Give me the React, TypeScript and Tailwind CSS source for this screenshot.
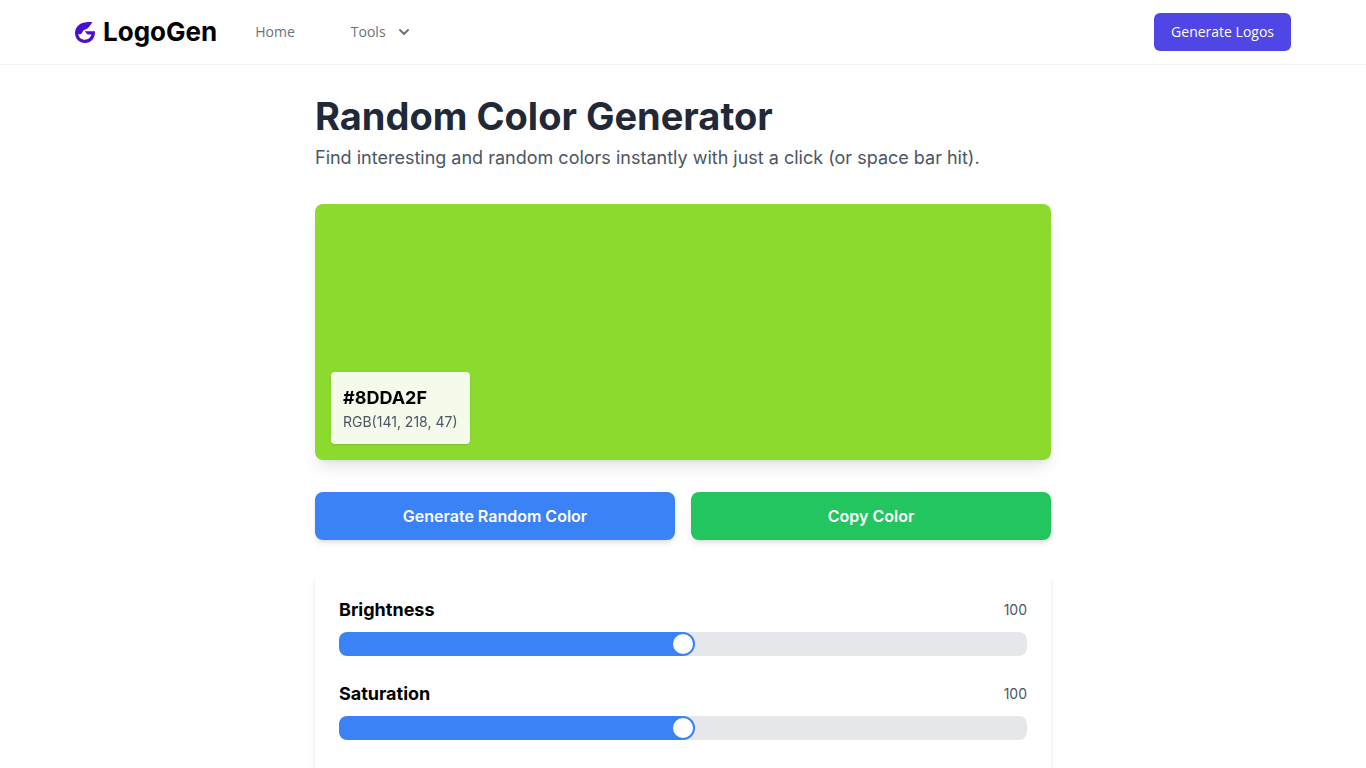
import { useEffect, useState } from "react"

function Logo() {
  return (
    <a href="#" className="flex items-center gap-2">
      <svg className="h-[22px] w-5" viewBox="0 0 20 22" aria-hidden="true">
        <path
          fill="#4a0fd0"
          d="M17.500 1C11 1 7.500 1.300 4.500 3.400C1.500 5.500 0 8.500 0 12C0 17.700 4.400 22 10 22C15.800 22 20 17.700 20 11V10.200H9.600L12.600 13.600H16.400C15.700 16.600 13.200 18.700 10 18.700C6.400 18.700 3.600 16.200 3.200 12.900C4.400 13.700 6.200 13.300 7 12C7.800 10.200 8.300 9.200 10.400 8.600C13.600 7.600 15 4.300 17.500 1Z"
        />
      </svg>
      <span className="font-['Inter',sans-serif] text-[26px] leading-8 font-bold text-black">LogoGen</span>
    </a>
  )
}

function Navbar() {
  return (
    <nav className="bg-white font-['Open_Sans',sans-serif] text-sm shadow-[0_1px_0_#f3f4f6]">
      <div className="mx-auto flex h-16 max-w-7xl items-center justify-between px-4 sm:px-8">
        <div className="flex items-center gap-[38px]">
          <Logo />
          <div className="hidden items-center gap-14 text-[#6b7280] sm:flex">
            <a href="#" className="hover:text-gray-900">Home</a>
            <button type="button" className="flex items-center gap-2 hover:text-gray-900">
              Tools
              <svg className="h-5 w-5" viewBox="0 0 20 20" fill="currentColor" aria-hidden="true">
                <path
                  fillRule="evenodd"
                  clipRule="evenodd"
                  d="M5.293 7.293a1 1 0 011.414 0L10 10.586l3.293-3.293a1 1 0 111.414 1.414l-4 4a1 1 0 01-1.414 0l-4-4a1 1 0 010-1.414z"
                />
              </svg>
            </button>
          </div>
        </div>
        <a
          href="#"
          className="rounded-md border border-transparent bg-[#4f46e5] px-4 py-2 text-white hover:bg-indigo-700"
        >
          Generate Logos
        </a>
      </div>
    </nav>
  )
}

type SliderProps = {
  id: string
  label: string
  value: number
  onChange: (value: number) => void
}

function Slider({ id, label, value, onChange }: SliderProps) {
  const percent = value / 2

  return (
    <div>
      <div className="mb-2 flex items-center justify-between">
        <label htmlFor={id} className="text-lg leading-7 font-bold text-black">{label}</label>
        <span className="text-sm text-[#4b5563]">{value}</span>
      </div>
      <input
        id={id}
        type="range"
        min={0}
        max={200}
        value={value}
        onChange={(e) => onChange(Number(e.target.value))}
        style={{ backgroundImage: `linear-gradient(to right, #3b82f6 ${percent}%, #e5e7eb ${percent}%)` }}
        className="block h-6 w-full cursor-pointer appearance-none rounded-lg [&::-webkit-slider-thumb]:h-6 [&::-webkit-slider-thumb]:w-6 [&::-webkit-slider-thumb]:appearance-none [&::-webkit-slider-thumb]:rounded-full [&::-webkit-slider-thumb]:border-2 [&::-webkit-slider-thumb]:border-[#3b82f6] [&::-webkit-slider-thumb]:bg-white"
      />
    </div>
  )
}

export default function App() {
  const [color, setColor] = useState([141, 218, 47])
  const [brightness, setBrightness] = useState(100)
  const [saturation, setSaturation] = useState(100)

  const hex = "#" + color.map((c) => c.toString(16).padStart(2, "0")).join("").toUpperCase()

  function handleGenerate() {
    setColor([0, 0, 0].map(() => Math.floor(Math.random() * 256)))
  }

  function handleCopy() {
    navigator.clipboard.writeText(hex)
  }

  useEffect(() => {
    function handleKey(e: KeyboardEvent) {
      if (e.code === "Space" && e.target === document.body) {
        e.preventDefault()
        handleGenerate()
      }
    }
    window.addEventListener("keydown", handleKey)
    return () => window.removeEventListener("keydown", handleKey)
  }, [])

  return (
    <div className="min-h-screen bg-white font-['Inter',sans-serif]">
      <Navbar />

      <main className="mx-auto max-w-3xl px-4 py-8">
        <h1 className="mb-2 text-[38px] leading-10 font-bold text-[#1f2937]">
          Random Color Generator
        </h1>
        <p className="mb-8 text-lg leading-7 text-[#4b5563]">
          Find interesting and random colors instantly with just a click (or space bar hit).
        </p>

        <div
          className="mb-8 flex h-64 items-end rounded-lg p-4 shadow-lg"
          style={{ backgroundColor: hex, filter: `brightness(${brightness}%) saturate(${saturation}%)` }}
        >
          <div className="rounded bg-white/90 p-3 shadow">
            <p className="text-lg leading-7 font-bold text-black">{hex}</p>
            <p className="text-sm text-[#4b5563]">RGB({color.join(", ")})</p>
          </div>
        </div>

        <div className="mb-8 grid gap-4 sm:grid-cols-2">
          <button
            type="button"
            className="rounded-lg bg-[#3b82f6] px-6 py-3 font-semibold text-white shadow-md hover:bg-blue-600"
            onClick={handleGenerate}
          >
            Generate Random Color
          </button>
          <button
            type="button"
            className="rounded-lg bg-[#22c55e] px-6 py-3 font-semibold text-white shadow-md hover:bg-green-600"
            onClick={handleCopy}
          >
            Copy Color
          </button>
        </div>

        <div className="flex flex-col gap-6 rounded-lg bg-white px-6 pt-6 pb-12 shadow-md">
          <Slider id="brightness" label="Brightness" value={brightness} onChange={setBrightness} />
          <Slider id="saturation" label="Saturation" value={saturation} onChange={setSaturation} />
        </div>
      </main>
    </div>
  )
}
